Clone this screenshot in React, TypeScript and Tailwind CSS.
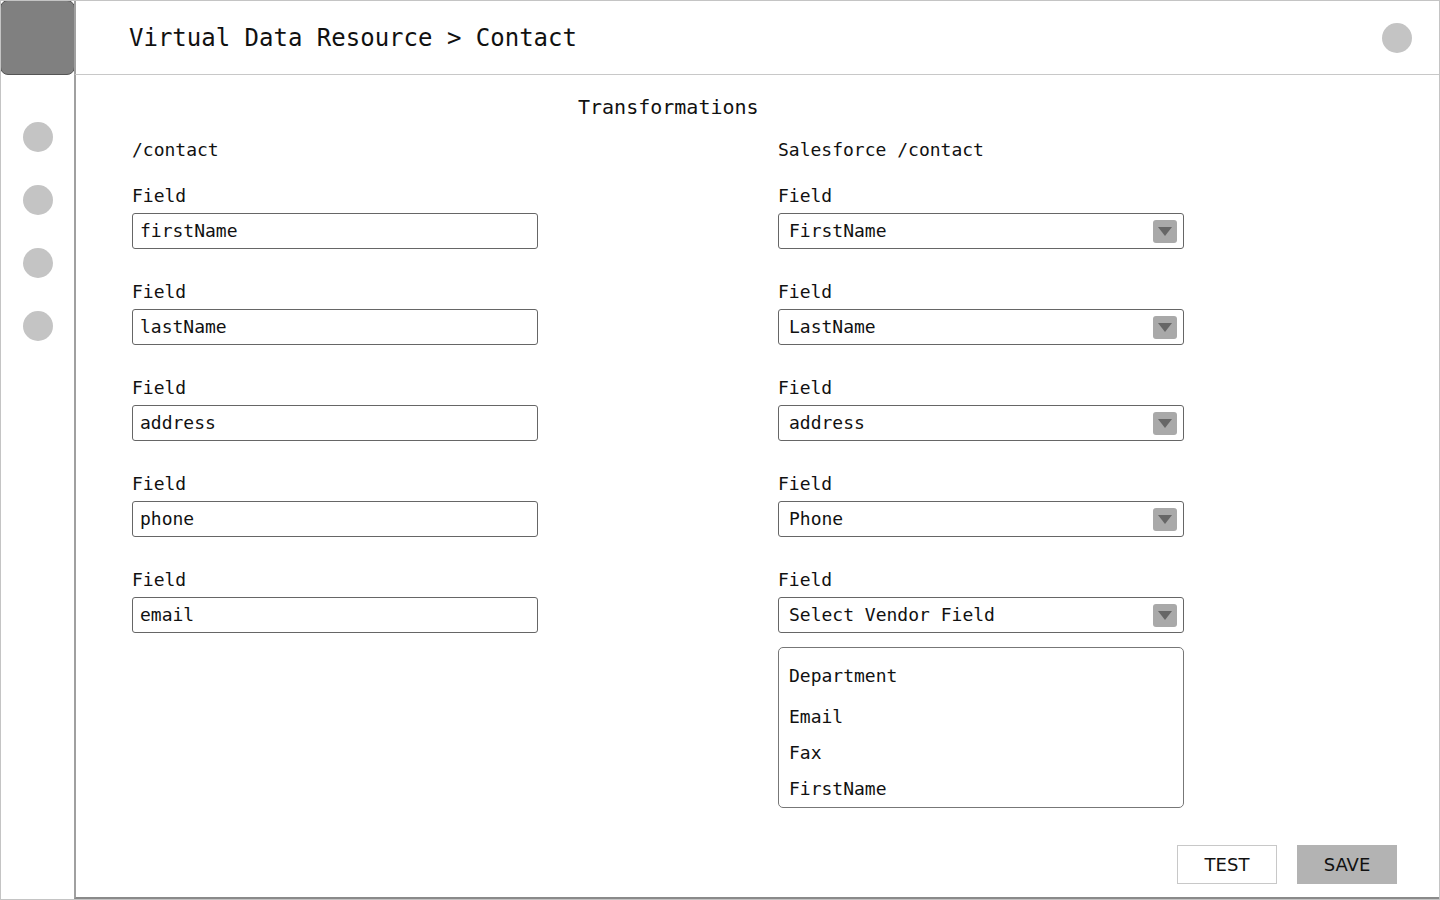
const leftFields = ["firstName", "lastName", "address", "phone", "email"];
const rightFields = ["FirstName", "LastName", "address", "Phone", "Select Vendor Field"];
const options = ["Department", "Email", "Fax", "FirstName"];

function Dot() {
  return <div className="h-[30px] w-[30px] rounded-full bg-[#c4c4c4]" />;
}

function Arrow() {
  return (
    <div className="flex h-[23px] w-[24px] items-center justify-center rounded-[3px] bg-[#a9a9a9]">
      <svg width="14" height="9" viewBox="0 0 14 9">
        <path d="M0 0 L14 0 L7 9 Z" fill="#666" />
      </svg>
    </div>
  );
}

export default function App() {
  return (
    <div
      className="flex h-[900px] w-[1440px] overflow-hidden border border-[#c4c4c4] bg-white text-[#111]"
      style={{ fontFamily: '"DejaVu Sans Mono", monospace' }}
    >
      <aside className="flex w-[73px] shrink-0 flex-col items-center">
        <div className="-ml-px -mt-px h-[75px] w-[75px] shrink-0 rounded-lg border border-[#555] bg-[#808080]" />
        <div className="mt-[47px] flex flex-col gap-[33px]">
          <Dot />
          <Dot />
          <Dot />
          <Dot />
        </div>
      </aside>

      <div className="flex flex-1 flex-col">
        <header className="flex h-[74px] shrink-0 items-center justify-between border-b border-l-2 border-b-[#c8c8c8] border-l-[#a0a0a0] pl-[53px] pr-[27px]">
          <h1 className="text-[24px] leading-none">Virtual Data Resource &gt; Contact</h1>
          <Dot />
        </header>

        <main className="flex flex-1 flex-col border-l-2 border-b-2 border-l-[#a0a0a0] border-b-[#8a8a8a]">
          <h2 className="pl-[502px] pt-[20px] text-[20px] leading-6">Transformations</h2>

          <div className="mt-[19px] flex gap-[240px] pl-[56px] text-[18px] leading-6">
            <section className="w-[406px]">
              <p className="mb-[22px]">/contact</p>
              <div className="flex flex-col gap-[31px]">
                {leftFields.map((f) => (
                  <div key={f}>
                    <p className="mb-[5px]">Field</p>
                    <div className="flex h-[36px] items-center rounded-[3px] border border-[#666] px-[7px]">
                      {f}
                    </div>
                  </div>
                ))}
              </div>
            </section>

            <section className="w-[406px]">
              <p className="mb-[22px]">Salesforce /contact</p>
              <div className="flex flex-col gap-[31px]">
                {rightFields.map((f) => (
                  <div key={f}>
                    <p className="mb-[5px]">Field</p>
                    <div className="flex h-[36px] items-center justify-between rounded-[3px] border border-[#666] pl-[10px] pr-[6px]">
                      <span>{f}</span>
                      <Arrow />
                    </div>
                  </div>
                ))}
              </div>
              <ul className="mt-[14px] h-[161px] rounded-[5px] border border-[#777] pl-[10px] pt-[16px]">
                {options.map((o, i) => (
                  <li key={o} className={i === 1 ? "mt-[17px]" : i > 1 ? "mt-[12px]" : ""}>
                    {o}
                  </li>
                ))}
              </ul>
            </section>
          </div>

          <div
            className="mt-auto flex justify-end gap-[20px] pb-[13px] pr-[42px] text-[18px]"
            style={{ fontFamily: '"DejaVu Sans", sans-serif' }}
          >
            <button className="h-[39px] w-[100px] border border-[#c8c8c8] bg-white">TEST</button>
            <button className="h-[39px] w-[100px] bg-[#b3b3b3]">SAVE</button>
          </div>
        </main>
      </div>
    </div>
  );
}
